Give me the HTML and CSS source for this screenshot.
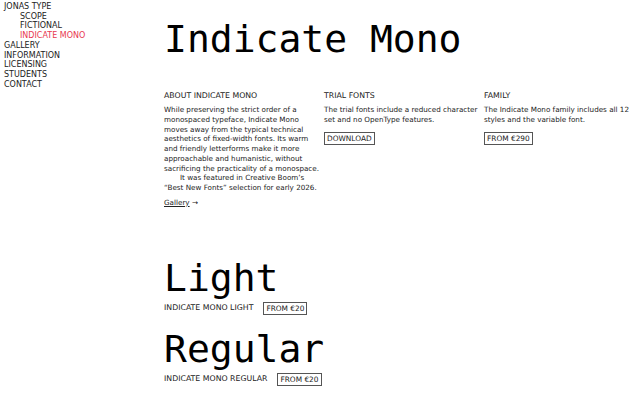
FILE: index.html
```html
<!DOCTYPE html>
<html lang="en">
<head>
<meta charset="utf-8">
<title>Indicate Mono</title>
<link rel="stylesheet" href="styles.css">
</head>
<body>
<div class="page">
  <nav class="nav">
    <a class="nav-link" href="#">JONAS TYPE</a>
    <a class="nav-link sub" href="#">SCOPE</a>
    <a class="nav-link sub" href="#">FICTIONAL</a>
    <a class="nav-link sub active" href="#">INDICATE MONO</a>
    <a class="nav-link" href="#">GALLERY</a>
    <a class="nav-link" href="#">INFORMATION</a>
    <a class="nav-link" href="#">LICENSING</a>
    <a class="nav-link" href="#">STUDENTS</a>
    <a class="nav-link" href="#">CONTACT</a>
  </nav>
  <main class="main">
    <h1 class="title">Indicate Mono</h1>
    <section class="info">
      <div class="col">
        <h2 class="label">ABOUT INDICATE MONO</h2>
        <p class="text">While preserving the strict order of a<br>monospaced typeface, Indicate Mono<br>moves away from the typical technical<br>aesthetics of fixed-width fonts. Its warm<br>and friendly letterforms make it more<br>approachable and humanistic, without<br>sacrificing the practicality of a monospace.</p>
        <p class="text indent">It was featured in Creative Boom’s<br>“Best New Fonts” selection for early 2026.</p>
        <a class="more" href="#"><span class="u">Gallery</span> →</a>
      </div>
      <div class="col">
        <h2 class="label">TRIAL FONTS</h2>
        <p class="text">The trial fonts include a reduced character<br>set and no OpenType features.</p>
        <a class="btn" href="#">DOWNLOAD</a>
      </div>
      <div class="col">
        <h2 class="label">FAMILY</h2>
        <p class="text">The Indicate Mono family includes all 12<br>styles and the variable font.</p>
        <a class="btn" href="#">FROM €290</a>
      </div>
    </section>
    <section class="styles">
      <div class="style">
        <div class="sample light">Light</div>
        <div class="meta"><span class="label">INDICATE MONO LIGHT</span><a class="btn" href="#">FROM €20</a></div>
      </div>
      <div class="style">
        <div class="sample">Regular</div>
        <div class="meta"><span class="label">INDICATE MONO REGULAR</span><a class="btn" href="#">FROM €20</a></div>
      </div>
    </section>
  </main>
</div>
</body>
</html>
```
FILE: styles.css
```css
html, body {
  margin: 0;
  padding: 0;
  background: #fff;
  color: #111;
  overflow: hidden;
}
body {
  font-family: "DejaVu Sans", "Liberation Sans", sans-serif;
  font-size: 8px;
}
a { color: inherit; text-decoration: none; }
.page {
  display: flex;
  align-items: flex-start;
}
.nav {
  flex: 0 0 auto;
  width: 160px;
  padding: 2px 0 0 4px;
  display: flex;
  flex-direction: column;
  font-size: 8px;
  line-height: 9.7px;
  color: #222;
}
.nav-link.sub { padding-left: 16px; }
.nav-link.active { color: #e8384f; }
.main {
  flex: 1;
  min-width: 0;
}
.title {
  margin: 20px 0 0 0;
  font-family: "DejaVu Sans Mono", "Liberation Mono", monospace;
  font-weight: normal;
  font-size: 38px;
  line-height: 38px;
  color: #000;
}
.info {
  margin-top: 33px;
  display: grid;
  grid-template-columns: 150px 150px 150px;
  column-gap: 10px;
}
.label {
  margin: 0;
  font-size: 7.8px;
  font-weight: normal;
  line-height: 10px;
  color: #222;
}
.col .label { margin-bottom: 4px; }
.text {
  margin: 0;
  font-family: "DejaVu Sans", sans-serif;
  font-size: 7.2px;
  line-height: 9.75px;
  white-space: nowrap;
  color: #222;
}
.text.indent { text-indent: 16px; }
.more {
  display: inline-block;
  margin-top: 5px;
  font-size: 7.2px;
  line-height: 10px;
  color: #222;
}
.more .u { text-decoration: underline; }
.btn {
  display: inline-block;
  margin-top: 7px;
  border: 1px solid #555;
  padding: 0 2px;
  font-size: 7.4px;
  line-height: 11px;
  color: #222;
}
.styles {
  margin-top: 51px;
  display: flex;
  flex-direction: column;
  gap: 15px;
}
.sample {
  font-family: "DejaVu Sans Mono", "Liberation Mono", monospace;
  font-size: 38px;
  line-height: 38px;
  color: #000;
}
.meta {
  display: flex;
  align-items: center;
  gap: 10px;
  margin-top: 5px;
}
.meta .btn { margin-top: 0; }
```
